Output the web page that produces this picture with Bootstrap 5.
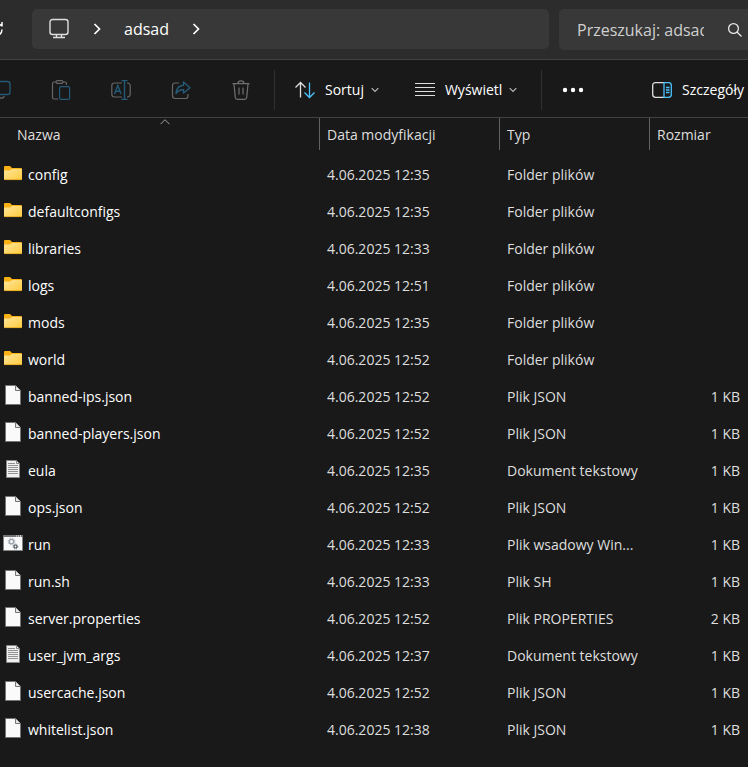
<!DOCTYPE html>
<html lang="pl" data-bs-theme="dark">
<head>
<meta charset="utf-8">
<meta name="viewport" content="width=device-width, initial-scale=1">
<title>adsad</title>
<link href="https://cdn.jsdelivr.net/npm/bootstrap@5.3.0/dist/css/bootstrap.min.css" rel="stylesheet">
<style>
body{background:#191919;color:#fff;font-family:"Open Sans","Noto Sans",sans-serif;font-size:14px;line-height:20px;overflow-x:hidden}
svg{display:block;flex:none}
.topbar{background:#2c2c2c;border-bottom:1px solid #424242;height:60px;padding-top:9px;overflow:hidden}
.field{background:#383838;border-radius:5px;height:40px}
.reload{width:32px;height:40px;overflow:hidden}
.reload svg{margin-left:-17px}
.address{margin-right:10px}
.address .btn{font-size:16px}
.crumbs{gap:23px}
.search{width:189px;height:41px;border-radius:5px 0 0 5px;padding-left:18px;padding-right:5px}
.search input{font-size:16px;width:127px;color:#cfcfcf;outline:0}
.search input::placeholder{color:#cfcfcf;opacity:1}
.tools{height:58px;border-bottom:1px solid #424242;padding-top:2px;overflow:hidden}
.btn{--bs-btn-padding-x:0px;--bs-btn-padding-y:0px;--bs-btn-border-width:0px;--bs-btn-color:#fff;--bs-btn-font-size:14px;--bs-btn-line-height:20px;--bs-btn-disabled-opacity:1;--bs-btn-disabled-color:#666}
.actions{margin-left:-29px;margin-right:3px}
.actions .btn{width:60px;height:40px}
.rule{width:1px;height:40px;background:#303030}
.pick{gap:10px}
.pick .chev{margin-left:-3px}
.view{margin-left:36px}
.files{table-layout:fixed;border-collapse:collapse}
.files th{font-weight:400;color:#dedede;padding:0 0 6px}
.files th .label{height:32px;padding:2px 7px 0;border-right:1px solid #636363}
.files th:first-child .label{padding-left:17px}
.files th:last-child .label{border:0}
.files td{height:37px;padding:1px 7px 0;color:#dedede;white-space:nowrap;overflow:hidden;text-overflow:ellipsis}
.files td:first-child{padding:0 0 0 3px}
.files td:first-child a{gap:5px;color:#fff}
.files td:first-child svg{margin-bottom:3px}
.files td:last-child{text-align:right;padding-right:8px}
.c-name{width:320px}.c-date{width:180px}.c-type{width:150px}
.sorted{left:50%;top:1px}
</style>
<script src="https://cdn.jsdelivr.net/npm/bootstrap@5.3.0/dist/js/bootstrap.bundle.min.js"></script>
</head>
<body>
<svg width="0" height="0" class="position-absolute" aria-hidden="true">
<defs>
<linearGradient id="gold" x1="0" y1="0" x2="1" y2="1"><stop offset="0" stop-color="#ffe69b"/><stop offset="1" stop-color="#ffca3e"/></linearGradient>
<symbol id="folder" viewBox="0 0 20 22"><path d="M1 5q0-1 1-1h5l2 2h9q1 0 1 1v4H1z" fill="#f9b115"/><path d="M1 8.500h6L9 7h10v10q0 1-1 1H2q-1 0-1-1z" fill="url(#gold)"/><path d="M1.500 17.600h17" stroke="#dfa21d" stroke-width=".8"/></symbol>
<symbol id="file" viewBox="0 0 20 22"><path d="M2.500 1.500h10l5 5v14h-15z" fill="#fafafa" stroke="#757575"/><path d="M12.500 1.500v5h5" fill="#e6e6e6" stroke="#757575"/></symbol>
<symbol id="text" viewBox="0 0 20 22"><path d="M3.500 2.500h10l3 3v14h-13z" fill="#f0f0f0" stroke="#858585"/><path d="M13.500 2.500v3h3" fill="none" stroke="#858585"/><path d="M5 5.500h7M5 7.500h10M5 9.500h10M5 11.500h10M5 13.500h10M5 15.500h10" stroke="#929292"/></symbol>
<symbol id="batch" viewBox="0 0 20 22"><path d="M.5 3.500h19v15H.5z" fill="#fafafa" stroke="#858585"/><path d="M0 4h20" stroke="#747474" stroke-width="2"/><path d="M13 4h1m1 0h1m1 0h1" stroke="#fff"/><g fill="none"><circle cx="8.500" cy="9.500" r="2.200" stroke="#9ba4ac" stroke-width="1.300"/><circle cx="8.500" cy="9.500" r="3.300" stroke="#9ba4ac" stroke-dasharray="1.300 1.292"/><circle cx="12.500" cy="14.500" r="1.500" stroke="#4b565e" stroke-width="1.200"/><circle cx="12.500" cy="14.500" r="2.400" stroke="#4b565e" stroke-width=".8" stroke-dasharray="1 .885"/></g></symbol>
<symbol id="down" viewBox="0 0 8 6"><path d="M.7 1.200 4 4.500l3.300-3.300" fill="none" stroke="#bdbdbd" stroke-width="1.100"/></symbol>
<symbol id="right" viewBox="0 0 8 12"><path d="m1.500 1 5 5-5 5" fill="none" stroke="#fff" stroke-width="1.700"/></symbol>
</defs></svg>

<header class="topbar d-flex">
  <button class="btn reload d-flex align-items-center" aria-label="Odśwież"><svg width="20" height="20" viewBox="0 0 20 20" fill="none" stroke="#fff" stroke-width="1.500"><path d="M19 10.500q0 3.500-3 5.500M16 4.500q1 2 3.500 2M19 3v4.500"/></svg></button>
  <nav class="address crumbs field flex-fill d-flex align-items-center" aria-label="Ścieżka">
    <button class="btn ms-3" aria-label="Ten komputer"><svg width="22" height="22" viewBox="0 0 22 22" fill="none" stroke="#dedede" stroke-width="1.400"><rect x="2" y="1.500" width="18" height="15" rx="2.500"/><path d="M8.500 16.500v3M13.500 16.500v3M5 19.500h12"/></svg></button>
    <svg width="8" height="12"><use href="#right"/></svg>
    <button class="btn">adsad</button>
    <svg width="8" height="12"><use href="#right"/></svg>
  </nav>
  <form class="search field d-flex align-items-center justify-content-between">
    <input class="bg-transparent border-0 p-0" type="text" placeholder="Przeszukaj: adsad" aria-label="Przeszukaj">
    <button class="btn" type="button" aria-label="Szukaj"><svg width="16" height="16" viewBox="0 0 16 16" fill="none" stroke="#e8e8e8" stroke-width="1.300"><circle cx="6.500" cy="6.500" r="4.900"/><path d="m10 10 4.500 4.500"/></svg></button>
  </form>
</header>

<div class="tools d-flex align-items-center" role="toolbar">
  <div class="actions d-flex">
    <button class="btn d-flex align-items-center justify-content-center" disabled aria-label="Kopiuj"><svg width="20" height="20" viewBox="0 0 20 20" fill="none" stroke="#626262" stroke-width="1.300"><path d="M4 6H2v10q0 2 2 2h7q2 0 2-2"/><rect x="6" y="1.500" width="13" height="13" rx="2.500" stroke="#255a77"/></svg></button>
    <button class="btn d-flex align-items-center justify-content-center" disabled aria-label="Wklej"><svg width="20" height="20" viewBox="0 0 20 20" fill="none" stroke="#666" stroke-width="1.200"><path d="M5 2H3Q1.500 2 1.500 3.500v14Q1.500 19 3 19h4M12 2h2q1.500 0 1.500 1.500V5"/><rect x="5" y=".6" width="7" height="2.800" rx="1.400"/><rect x="8.600" y="6.600" width="10" height="12.800" rx="1.500" stroke="#255a77"/></svg></button>
    <button class="btn d-flex align-items-center justify-content-center" disabled aria-label="Zmień nazwę"><svg width="20" height="20" viewBox="0 0 20 20" fill="none" stroke="#666" stroke-width="1.200"><path d="M11 3H3.500Q.8 3 .8 5.500v8.800Q.8 17 3.500 17H11M16 3q3.200 0 3.200 3v8q0 3-3.200 3"/><path d="m3.500 14 3.300-8.500L10 14M4.600 11.200H9M13.500.8v18.400M10.500.6h6M10.500 19.400h6" stroke="#255a77" stroke-width="1.400"/></svg></button>
    <button class="btn d-flex align-items-center justify-content-center" disabled aria-label="Udostępnij"><svg width="20" height="20" viewBox="0 0 20 20" fill="none" stroke="#666" stroke-width="1.200"><path d="M8 3H4Q1.500 3 1.500 5.500v10.300q0 2.700 2.700 2.700h10.300q2.500 0 2.500-2.500v-2"/><path d="M12.500 2 19 7.700 12.500 13v-3.200Q8 9.500 5 13.500 5.500 6 12.500 5.300z" stroke="#255a77" stroke-width="1.400" stroke-linejoin="round"/></svg></button>
    <button class="btn d-flex align-items-center justify-content-center" disabled aria-label="Usuń"><svg width="20" height="20" viewBox="0 0 20 20" fill="none" stroke="#707070" stroke-width="1.200"><path d="M1.500 3.600h17M7 3.500Q7 .8 10 .8t3 2.700M3 4l1.300 13.500q.2 1.900 2 1.900h7.400q1.800 0 2-1.900L17 4M8 7.500v7M12 7.500v7"/></svg></button>
  </div>
  <div class="rule"></div>
  <button class="btn pick d-flex align-items-center ms-3 ps-1"><svg width="20" height="20" viewBox="0 0 20 20" fill="none" stroke="#dedede" stroke-width="1.300"><path d="M5.500 17.500v-15M.5 7.500l5-5 5 5"/><path d="M14.500 2.500v15M9.500 12.500l5 5 5-5" stroke="#4cc2ff"/></svg>Sortuj<svg class="chev" width="8" height="6"><use href="#down"/></svg></button>
  <button class="btn pick view d-flex align-items-center"><svg width="20" height="20" viewBox="0 0 20 20" stroke="#dedede" stroke-width="1.200"><path d="M0 3.500h20M0 7.500h20M0 11.500h20M0 15.500h20"/></svg>Wyświetl<svg class="chev" width="8" height="6"><use href="#down"/></svg></button>
  <div class="rule ms-4"></div>
  <button class="btn ms-3 ps-1" aria-label="Więcej"><svg width="22" height="6" fill="#fff"><circle cx="3" cy="3" r="2.200"/><circle cx="11" cy="3" r="2.200"/><circle cx="19" cy="3" r="2.200"/></svg></button>
  <button class="btn pick d-flex align-items-center ms-auto me-1"><svg width="20" height="20" viewBox="0 0 20 20" fill="none" stroke-width="1.300"><path d="M12 2.700H3.500Q.7 2.700 .7 5.500v9q0 2.800 2.800 2.800H12" stroke="#dedede"/><path d="M12 2.700h4.500q2.800 0 2.800 2.800v9q0 2.800-2.800 2.800H12zM14 7.500h3.500M14 10h3.500M14 12.500h3.500" stroke="#4cc2ff"/></svg>Szczegóły</button>
</div>

<table class="files w-100">
  <colgroup><col class="c-name"><col class="c-date"><col class="c-type"><col></colgroup>
  <thead><tr>
    <th scope="col" aria-sort="ascending"><div class="label d-flex align-items-center position-relative">Nazwa<svg class="sorted position-absolute" width="10" height="6" viewBox="0 0 10 6"><path d="m.5 5.200 4.500-4.500 4.500 4.500" fill="none" stroke="#a5a5a5"/></svg></div></th>
    <th scope="col"><div class="label d-flex align-items-center">Data modyfikacji</div></th>
    <th scope="col"><div class="label d-flex align-items-center">Typ</div></th>
    <th scope="col"><div class="label d-flex align-items-center">Rozmiar</div></th>
  </tr></thead>
  <tbody>
    <tr><td><a href="#" class="d-flex align-items-center text-decoration-none"><svg width="20" height="22"><use href="#folder"/></svg>config</a></td><td>4.06.2025 12:35</td><td>Folder plików</td><td></td></tr>
    <tr><td><a href="#" class="d-flex align-items-center text-decoration-none"><svg width="20" height="22"><use href="#folder"/></svg>defaultconfigs</a></td><td>4.06.2025 12:35</td><td>Folder plików</td><td></td></tr>
    <tr><td><a href="#" class="d-flex align-items-center text-decoration-none"><svg width="20" height="22"><use href="#folder"/></svg>libraries</a></td><td>4.06.2025 12:33</td><td>Folder plików</td><td></td></tr>
    <tr><td><a href="#" class="d-flex align-items-center text-decoration-none"><svg width="20" height="22"><use href="#folder"/></svg>logs</a></td><td>4.06.2025 12:51</td><td>Folder plików</td><td></td></tr>
    <tr><td><a href="#" class="d-flex align-items-center text-decoration-none"><svg width="20" height="22"><use href="#folder"/></svg>mods</a></td><td>4.06.2025 12:35</td><td>Folder plików</td><td></td></tr>
    <tr><td><a href="#" class="d-flex align-items-center text-decoration-none"><svg width="20" height="22"><use href="#folder"/></svg>world</a></td><td>4.06.2025 12:52</td><td>Folder plików</td><td></td></tr>
    <tr><td><a href="#" class="d-flex align-items-center text-decoration-none"><svg width="20" height="22"><use href="#file"/></svg>banned-ips.json</a></td><td>4.06.2025 12:52</td><td>Plik JSON</td><td>1 KB</td></tr>
    <tr><td><a href="#" class="d-flex align-items-center text-decoration-none"><svg width="20" height="22"><use href="#file"/></svg>banned-players.json</a></td><td>4.06.2025 12:52</td><td>Plik JSON</td><td>1 KB</td></tr>
    <tr><td><a href="#" class="d-flex align-items-center text-decoration-none"><svg width="20" height="22"><use href="#text"/></svg>eula</a></td><td>4.06.2025 12:35</td><td>Dokument tekstowy</td><td>1 KB</td></tr>
    <tr><td><a href="#" class="d-flex align-items-center text-decoration-none"><svg width="20" height="22"><use href="#file"/></svg>ops.json</a></td><td>4.06.2025 12:52</td><td>Plik JSON</td><td>1 KB</td></tr>
    <tr><td><a href="#" class="d-flex align-items-center text-decoration-none"><svg width="20" height="22"><use href="#batch"/></svg>run</a></td><td>4.06.2025 12:33</td><td>Plik wsadowy Win...</td><td>1 KB</td></tr>
    <tr><td><a href="#" class="d-flex align-items-center text-decoration-none"><svg width="20" height="22"><use href="#file"/></svg>run.sh</a></td><td>4.06.2025 12:33</td><td>Plik SH</td><td>1 KB</td></tr>
    <tr><td><a href="#" class="d-flex align-items-center text-decoration-none"><svg width="20" height="22"><use href="#file"/></svg>server.properties</a></td><td>4.06.2025 12:52</td><td>Plik PROPERTIES</td><td>2 KB</td></tr>
    <tr><td><a href="#" class="d-flex align-items-center text-decoration-none"><svg width="20" height="22"><use href="#text"/></svg>user_jvm_args</a></td><td>4.06.2025 12:37</td><td>Dokument tekstowy</td><td>1 KB</td></tr>
    <tr><td><a href="#" class="d-flex align-items-center text-decoration-none"><svg width="20" height="22"><use href="#file"/></svg>usercache.json</a></td><td>4.06.2025 12:52</td><td>Plik JSON</td><td>1 KB</td></tr>
    <tr><td><a href="#" class="d-flex align-items-center text-decoration-none"><svg width="20" height="22"><use href="#file"/></svg>whitelist.json</a></td><td>4.06.2025 12:38</td><td>Plik JSON</td><td>1 KB</td></tr>
  </tbody>
</table>
</body>
</html>
